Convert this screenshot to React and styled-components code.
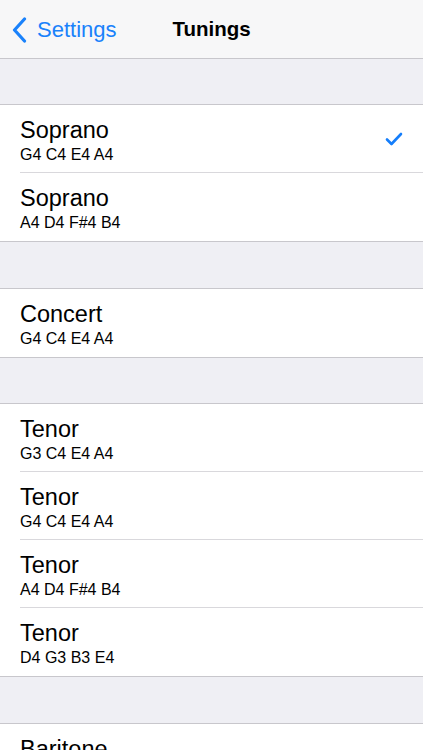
import React from "react";
import styled, { createGlobalStyle } from "styled-components";

const GlobalStyle = createGlobalStyle`
  html, body {
    margin: 0;
    padding: 0;
    background: #efeff4;
    font-family: "Liberation Sans", Arial, Helvetica, sans-serif;
    -webkit-font-smoothing: antialiased;
  }
`;

const Screen = styled.div`
  width: 423px;
  min-height: 750px;
  background: #efeff4;
  padding-bottom: 40px;
`;

const NavBar = styled.header`
  height: 59px;
  box-sizing: border-box;
  background: #f7f7f8;
  border-bottom: 1px solid #c8c7cc;
  display: grid;
  grid-template-columns: 1fr auto 1fr;
  align-items: center;
`;

const BackButton = styled.div`
  display: flex;
  align-items: center;
  gap: 10px;
  padding-left: 12px;
  color: #1a82fb;
  font-size: 22px;
  padding-top: 1px;
`;

const NavTitle = styled.div`
  font-size: 20.5px;
  font-weight: 700;
  color: #000;
`;

const Section = styled.section`
  margin-top: ${(p) => (p.$first ? "45px" : "45.5px")};
  background: #fff;
  border-top: 1px solid #c8c7cc;
  border-bottom: 1px solid #c8c7cc;
`;

const Row = styled.div`
  padding-left: 20px;
`;

const RowBody = styled.div`
  height: 68px;
  box-sizing: border-box;
  display: flex;
  align-items: center;
  justify-content: space-between;
  padding-right: 20px;
  border-bottom: ${(p) => (p.$last ? "none" : "1px solid #d9d8dc")};
`;

const Labels = styled.div`
  display: flex;
  flex-direction: column;
  padding-top: 3px;
`;

const Title = styled.div`
  font-size: 23.5px;
  line-height: 26px;
  color: #000;
`;

const Notes = styled.div`
  margin-top: 3px;
  font-size: 16px;
  line-height: 18px;
  color: #000;
`;

const Chevron = () => (
  <svg width="15" height="26" viewBox="0 0 15 26">
    <path
      d="M12.5 2 L2.5 13 L12.5 24"
      fill="none"
      stroke="#1a82fb"
      strokeWidth="3.2"
      strokeLinecap="round"
      strokeLinejoin="round"
    />
  </svg>
);

const Check = () => (
  <svg width="18" height="14" viewBox="0 0 18 14">
    <path
      d="M2 7.5 L6.5 12 L16 2"
      fill="none"
      stroke="#157efb"
      strokeWidth="2.6"
      strokeLinecap="round"
      strokeLinejoin="round"
    />
  </svg>
);

const groups = [
  [
    { name: "Soprano", notes: "G4 C4 E4 A4", selected: true },
    { name: "Soprano", notes: "A4 D4 F#4 B4" },
  ],
  [{ name: "Concert", notes: "G4 C4 E4 A4" }],
  [
    { name: "Tenor", notes: "G3 C4 E4 A4" },
    { name: "Tenor", notes: "G4 C4 E4 A4" },
    { name: "Tenor", notes: "A4 D4 F#4 B4" },
    { name: "Tenor", notes: "D4 G3 B3 E4" },
  ],
  [{ name: "Baritone", notes: "D3 G3 B3 E4" }],
];

const App = () => {
  return (
    <Screen>
      <GlobalStyle />
      <NavBar>
        <BackButton>
          <Chevron />
          <span>Settings</span>
        </BackButton>
        <NavTitle>Tunings</NavTitle>
        <div />
      </NavBar>
      {groups.map((rows, gi) => (
        <Section key={gi} $first={gi === 0}>
          {rows.map((r, i) => (
            <Row key={i}>
              <RowBody $last={i === rows.length - 1}>
                <Labels>
                  <Title>{r.name}</Title>
                  <Notes>{r.notes}</Notes>
                </Labels>
                {r.selected && <Check />}
              </RowBody>
            </Row>
          ))}
        </Section>
      ))}
    </Screen>
  );
};

export default App;
